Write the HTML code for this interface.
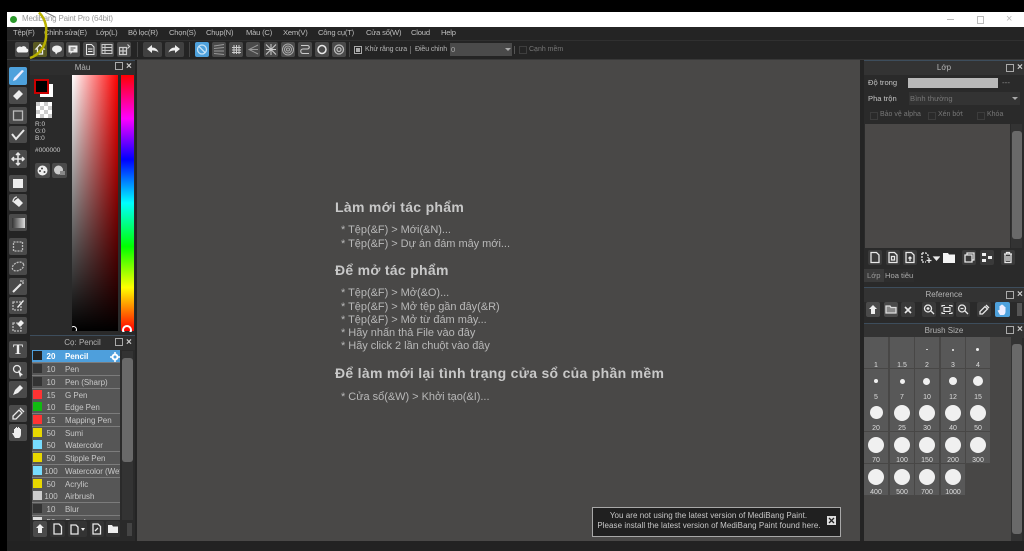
<!DOCTYPE html>
<html><head><meta charset="utf-8"><style>
html,body{margin:0;padding:0;background:#000}
#r{position:relative;width:1024px;height:551px;overflow:hidden;background:#000;font-family:"Liberation Sans","Noto Sans CJK JP",sans-serif;font-size:8px;color:#c4c4c4}
#r div,#r span.a,#r svg{position:absolute}
.t{white-space:nowrap;line-height:10px}
.b{background:#4a4a4a;border-radius:2px}
.d{background:#333;border-radius:2px}
.hd{background:#333;border-top:1px solid #3d4d5c;color:#b4b4b4;text-align:center;line-height:14px;font-size:8px}
.m{top:28px;font-size:7.6px;color:#bdbdbd;letter-spacing:-.2px}
.h{left:335px;font-weight:bold;font-size:14px;letter-spacing:.3px;color:#c8c8c8;white-space:nowrap;line-height:16px}
.l{left:341px;font-size:11px;letter-spacing:-.03px;color:#b8b8b8;white-space:nowrap;line-height:13px}
.row{left:32px;width:88px;height:12px;background:#565656;color:#c8c8c8;font-size:8px;line-height:14px;border-bottom:1px solid #7c7c7c}
.row .s{left:1px;top:1px;width:9px;height:9px}
.row .n{left:12px;top:0;width:14px;text-align:center}
.row .p{left:33px;top:0;white-space:nowrap;width:55px;overflow:hidden;letter-spacing:-.05px}
.c{width:24px;height:31px;background:#585858}
.c div{background:#f0f0f0;border-radius:50%}
.c span{position:absolute;left:0;width:24px;bottom:-2px;text-align:center;font-size:7px;line-height:9px;color:#ddd}
svg{fill:none;stroke:#e8e8e8;stroke-width:1.3}
</style></head><body><div id="r">
<!-- titlebar -->
<div style="left:7px;top:12px;width:1017px;height:15px;background:#fff"></div>
<div style="left:10px;top:16px;width:7px;height:7px;border-radius:50%;background:#2c9a2c"></div>
<div class="t" style="left:22px;top:14px;font-size:8px;letter-spacing:-.2px;color:#9a9a9a">MediBang Paint Pro (64bit)</div>
<div style="left:947px;top:19px;width:7px;height:1px;background:#bbb"></div>
<div style="left:977px;top:16px;width:5px;height:6px;border:1px solid #bbb"></div>
<div class="t" style="left:1006px;top:14px;font-size:11px;color:#bbb">×</div>
<!-- left black and base -->
<div style="left:7px;top:27px;width:1017px;height:524px;background:#242424"></div>
<div style="left:7px;top:40px;width:1017px;height:1px;background:#303030"></div>
<div style="left:7px;top:59px;width:1017px;height:1px;background:#383838"></div>
<!-- menu -->
<div class="t m" style="left:13px">Tệp(F)</div>
<div class="t m" style="left:44px">Chỉnh sửa(E)</div>
<div class="t m" style="left:96px">Lớp(L)</div>
<div class="t m" style="left:128px">Bộ lọc(R)</div>
<div class="t m" style="left:169px">Chọn(S)</div>
<div class="t m" style="left:206px">Chụp(N)</div>
<div class="t m" style="left:246px">Màu (C)</div>
<div class="t m" style="left:283px">Xem(V)</div>
<div class="t m" style="left:318px">Công cụ(T)</div>
<div class="t m" style="left:366px">Cửa sổ(W)</div>
<div class="t m" style="left:411px">Cloud</div>
<div class="t m" style="left:441px">Help</div>
<!-- toolbar left -->
<div class="b" style="left:15px;top:42px;width:14px;height:15px"></div>
<svg style="left:15px;top:42px" width="14" height="15"><path d="M3 10.500h8a2 2 0 0 0 .5-4 3 3 0 0 0-5-1.500 2.500 2.500 0 0 0-3.500 5.500z" fill="#f4f4f4" stroke="none"/></svg>
<div class="b" style="left:33px;top:42px;width:14px;height:15px;background:#5a5a22"></div>
<svg style="left:33px;top:42px" width="14" height="15"><path d="M7 2.500L3 7h1.500v5h5V7H11z" stroke="#eee"/></svg>
<div class="b" style="left:50px;top:42px;width:14px;height:15px"></div>
<svg style="left:50px;top:42px" width="14" height="15"><ellipse cx="7" cy="7" rx="5" ry="3.500" fill="#eee" stroke="none"/><path d="M5 10l1 2.500 2-2.500z" fill="#eee" stroke="none"/></svg>
<div class="b" style="left:66px;top:42px;width:14px;height:15px"></div>
<svg style="left:66px;top:42px" width="14" height="15"><path d="M2.500 3.500h9v7H6L4.500 12.500v-2h-2z" fill="#eee" stroke="none"/><path d="M4.500 6h5M4.500 8h3" stroke="#4a4a4a" stroke-width="1"/></svg>
<div class="b" style="left:83px;top:42px;width:14px;height:15px"></div>
<svg style="left:83px;top:42px" width="14" height="15"><path d="M3.500 2.500h5l2.500 2.500v7.500h-7.500zM5 7h4.500M5 9.500h4.500" stroke-width="1"/></svg>
<div class="b" style="left:100px;top:42px;width:14px;height:15px"></div>
<svg style="left:100px;top:42px" width="14" height="15"><path d="M2 2.500h10v9H2zM2 5.500h10M2 8.500h10M5 2.500v9" stroke-width="1" stroke="#ccc"/></svg>
<div class="b" style="left:117px;top:42px;width:14px;height:15px"></div>
<svg style="left:117px;top:42px" width="14" height="15"><path d="M2.500 5.500h7v7h-7zM2.500 9h7M6 5.500v7M10.500 2.500l2 2-2 2" stroke-width="1.200" stroke="#ccc"/></svg>
<div style="left:137px;top:42px;width:1px;height:15px;background:#444"></div>
<div class="b" style="left:143px;top:42px;width:19px;height:15px;background:#404040"></div>
<svg style="left:143px;top:42px" width="19" height="15"><path d="M4 7l5-4v2.500c3 0 5.500 1.500 6.500 5-1.500-1.500-3.500-2-6.500-2V11z" fill="#eee" stroke="none"/></svg>
<div class="b" style="left:165px;top:42px;width:19px;height:15px;background:#404040"></div>
<svg style="left:165px;top:42px" width="19" height="15"><path d="M15 7l-5-4v2.500c-3 0-5.500 1.500-6.500 5 1.500-1.500 3.500-2 6.500-2V11z" fill="#eee" stroke="none"/></svg>
<div style="left:189px;top:42px;width:1px;height:15px;background:#444"></div>
<div class="b" style="left:195px;top:42px;width:14px;height:15px;background:#4ea1dc"></div>
<svg style="left:195px;top:42px" width="14" height="15"><circle cx="7" cy="7.500" r="4.500" stroke="#c5e2f5"/><path d="M4 4.500l6 6" stroke="#c5e2f5"/></svg>
<div class="b" style="left:212px;top:42px;width:14px;height:15px"></div>
<svg style="left:212px;top:42px" width="14" height="15"><path d="M2 4l10-1.500M2 6.500l10-1M2 9l10 0M2 11.500l10 1" stroke="#999" stroke-width="1"/></svg>
<div class="b" style="left:229px;top:42px;width:14px;height:15px"></div>
<svg style="left:229px;top:42px" width="14" height="15"><path d="M5 3v9M7.500 3v9M10 3v9M3 5.500h9M3 8h9M3 10.500h9" stroke="#ccc" stroke-width="1"/></svg>
<div class="b" style="left:246px;top:42px;width:14px;height:15px"></div>
<svg style="left:246px;top:42px" width="14" height="15"><path d="M12 3L3 7.500l9 4.500M12 7.500H3" stroke="#999" stroke-width="1"/></svg>
<div class="b" style="left:264px;top:42px;width:14px;height:15px"></div>
<svg style="left:264px;top:42px" width="14" height="15"><path d="M2 2.500l10 10M12 2.500l-10 10M7 2v11M2 7.500h10" stroke="#ccc" stroke-width="1"/></svg>
<div class="b" style="left:281px;top:42px;width:14px;height:15px"></div>
<svg style="left:281px;top:42px" width="14" height="15"><circle cx="7" cy="7.500" r="5.500" stroke="#aaa" stroke-width="1"/><circle cx="7" cy="7.500" r="3.500" stroke="#aaa" stroke-width="1"/><circle cx="7" cy="7.500" r="1.500" stroke="#aaa" stroke-width="1"/></svg>
<div class="b" style="left:298px;top:42px;width:14px;height:15px"></div>
<svg style="left:298px;top:42px" width="14" height="15"><path d="M3 3.500h6.500a1.500 1.500 0 0 1 0 3.500H5a1.500 1.500 0 0 0 0 4.500h6" stroke="#ccc" stroke-width="1.100"/></svg>
<div class="b" style="left:315px;top:42px;width:14px;height:15px"></div>
<svg style="left:315px;top:42px" width="14" height="15"><circle cx="7" cy="7.500" r="4" stroke-width="1.500"/></svg>
<div class="b" style="left:332px;top:42px;width:14px;height:15px"></div>
<svg style="left:332px;top:42px" width="14" height="15"><circle cx="7" cy="7.500" r="4.500" stroke="#bbb"/><circle cx="7" cy="7.500" r="2" stroke="#bbb"/></svg>
<div style="left:349px;top:42px;width:1px;height:15px;background:#444"></div>
<div style="left:354px;top:46px;width:6px;height:6px;border:1px solid #aaa"></div>
<div style="left:356px;top:48px;width:4px;height:4px;background:#aaa"></div>
<div class="t" style="left:365px;top:45px;font-size:7px;letter-spacing:-.1px;color:#b4b4b4">Khử răng cưa</div>
<div style="left:410px;top:46px;width:1px;height:8px;background:#666"></div>
<div class="t" style="left:415px;top:45px;font-size:7px;letter-spacing:-.1px;color:#b4b4b4">Điều chỉnh</div>
<div style="left:450px;top:43px;width:62px;height:13px;background:#4a4a4a"></div>
<div class="t" style="left:451px;top:45px;font-size:7.500px;color:#aaa">0</div>
<div style="left:505px;top:48px;width:0;height:0;border:3px solid transparent;border-top:3px solid #aaa"></div>
<div style="left:514px;top:46px;width:1px;height:8px;background:#555"></div>
<div style="left:519px;top:46px;width:6px;height:6px;border:1px solid #3e3e3e"></div>
<div class="t" style="left:529px;top:45px;font-size:7px;color:#777">Cạnh mềm</div>
<!-- canvas -->
<div style="left:137px;top:60px;width:723px;height:481px;background:#494847"></div>
<div style="left:0;top:0;width:7px;height:551px;background:#000"></div>
<div class="h" style="top:199px">Làm mới tác phẩm</div>
<div class="l" style="top:224px">* Tệp(&amp;F) &gt; Mới(&amp;N)...</div>
<div class="l" style="top:238px">* Tệp(&amp;F) &gt; Dự án đám mây mới...</div>
<div class="h" style="top:262px">Để mở tác phẩm</div>
<div class="l" style="top:287px">* Tệp(&amp;F) &gt; Mở(&amp;O)...</div>
<div class="l" style="top:301px">* Tệp(&amp;F) &gt; Mở tệp gần đây(&amp;R)</div>
<div class="l" style="top:314px">* Tệp(&amp;F) &gt; Mở từ đám mây...</div>
<div class="l" style="top:327px">* Hãy nhấn thả File vào đây</div>
<div class="l" style="top:340px">* Hãy click 2 lần chuột vào đây</div>
<div class="h" style="top:365px">Để làm mới lại tình trạng cửa sổ của phần mềm</div>
<div class="l" style="top:391px">* Cửa sổ(&amp;W) &gt; Khởi tạo(&amp;I)...</div>
<!-- notification -->
<div style="left:592px;top:507px;width:247px;height:28px;background:#202020;border:1px solid #a8a8a8"></div>
<div class="t" style="left:592px;top:511px;width:233px;text-align:center;font-size:8px;letter-spacing:.05px;color:#c8c8c8">You are not using the latest version of MediBang Paint.</div>
<div class="t" style="left:592px;top:521px;width:234px;text-align:center;font-size:8px;letter-spacing:.05px;color:#c8c8c8">Please install the latest version of MediBang Paint found here.</div>
<div style="left:827px;top:516px;width:9px;height:9px;background:#ddd"></div>
<svg style="left:827px;top:516px" width="9" height="9"><path d="M2 2l5 5M7 2l-5 5" stroke="#222"/></svg>
<!-- tool column -->
<div class="b" style="left:9px;top:67px;width:18px;height:18px;background:#4ea1dc"></div>
<svg style="left:9px;top:67px" width="18" height="18"><path d="M4 14l3-1 8-9-2-1-8 8z" fill="#eef" stroke="none"/></svg>
<div class="b" style="left:9px;top:87px;width:18px;height:17px"></div>
<svg style="left:9px;top:87px" width="18" height="17"><path d="M4 9l6-6 4 4-6 6z" fill="#eee" stroke="none"/></svg>
<div class="b" style="left:9px;top:107px;width:18px;height:17px"></div>
<svg style="left:9px;top:107px" width="18" height="17"><rect x="4.500" y="4" width="9" height="9" stroke="#bbb"/></svg>
<div class="b" style="left:9px;top:126px;width:18px;height:17px"></div>
<svg style="left:9px;top:126px" width="18" height="17"><path d="M3 8l4 5 8-9" stroke-width="2"/></svg>
<div class="b" style="left:9px;top:150px;width:18px;height:18px"></div>
<svg style="left:9px;top:150px" width="18" height="18"><path d="M9 3v12M3 9h12M7 5l2-2 2 2M7 13l2 2 2-2M5 7l-2 2 2 2M13 7l2 2-2 2" stroke-width="1.500"/></svg>
<div class="b" style="left:9px;top:175px;width:18px;height:17px"></div>
<div style="left:13px;top:179px;width:10px;height:9px;background:#eee"></div>
<div class="b" style="left:9px;top:194px;width:18px;height:17px"></div>
<svg style="left:9px;top:194px" width="18" height="17"><path d="M4 8l5-4 5 5-4 4z" fill="#eee" stroke="none"/><path d="M4 8c0-3 2-5 4-5" /></svg>
<div class="b" style="left:9px;top:214px;width:18px;height:17px"></div>
<div style="left:12px;top:218px;width:13px;height:10px;background:linear-gradient(90deg,#333,#ddd)"></div>
<div class="b" style="left:9px;top:238px;width:18px;height:17px"></div>
<svg style="left:9px;top:238px" width="18" height="17"><rect x="4.500" y="4" width="9" height="9" stroke="#bbb" stroke-dasharray="2 1"/></svg>
<div class="b" style="left:9px;top:258px;width:18px;height:17px"></div>
<svg style="left:9px;top:258px" width="18" height="17"><ellipse cx="9" cy="8.500" rx="6" ry="4" transform="rotate(-25 9 8.500)" stroke="#bbb" stroke-dasharray="2 1"/></svg>
<div class="b" style="left:9px;top:278px;width:18px;height:17px"></div>
<svg style="left:9px;top:278px" width="18" height="17"><path d="M4 14l8-8" stroke-width="2"/><path d="M12 2v2M15 5h-2M14.500 2.500l-1 1" stroke-width="1"/></svg>
<div class="b" style="left:9px;top:297px;width:18px;height:17px"></div>
<svg style="left:9px;top:297px" width="18" height="17"><rect x="4" y="5" width="8" height="8" stroke="#bbb" stroke-dasharray="2 1"/><path d="M8 10l6-7 1 1-6 7z" fill="#eee" stroke="none"/></svg>
<div class="b" style="left:9px;top:317px;width:18px;height:17px"></div>
<svg style="left:9px;top:317px" width="18" height="17"><rect x="4" y="6" width="8" height="8" stroke="#bbb" stroke-dasharray="2 1"/><path d="M8 7l4-4 3 3-4 4z" fill="#eee" stroke="none"/></svg>
<div class="b" style="left:9px;top:341px;width:18px;height:17px"></div>
<div class="t" style="left:9px;top:341px;width:18px;text-align:center;font:bold 15px/18px 'Liberation Serif',serif;color:#eee">T</div>
<div class="b" style="left:9px;top:362px;width:18px;height:17px"></div>
<svg style="left:9px;top:362px" width="18" height="17"><circle cx="8" cy="7" r="3.500"/><path d="M9 8l5 5-2 .5-1 2z" fill="#eee" stroke="none"/></svg>
<div class="b" style="left:9px;top:381px;width:18px;height:17px"></div>
<svg style="left:9px;top:381px" width="18" height="17"><path d="M4 14l2-5 5-5 3 3-5 5z" fill="#eee" stroke="none"/></svg>
<div class="b" style="left:9px;top:405px;width:18px;height:17px"></div>
<svg style="left:9px;top:405px" width="18" height="17"><path d="M4 14v-3l6-6 3 3-6 6zM11 3l4 4"/></svg>
<div class="b" style="left:9px;top:424px;width:18px;height:17px"></div>
<svg style="left:9px;top:424px" width="18" height="17"><path d="M6 14l-3-5 2 0V5h1V4h1v-1h1v1h1v-1h1v1h1v1h1v5c0 2-1 4-2 4z" fill="#eee" stroke="none"/></svg>
<!-- color panel -->
<div style="left:30px;top:60px;width:105px;height:275px;background:#2a2a2a"></div>
<div class="hd" style="left:30px;top:60px;width:105px;height:14px;background:#2e2e2e">Màu</div>
<div class="t" style="left:115px;top:62px;width:6px;height:6px;border:1px solid #aaa"></div>
<div class="t" style="left:126px;top:60px;font:bold 10px/13px 'Liberation Sans';color:#ccc">×</div>
<div style="left:40px;top:84px;width:13px;height:13px;background:#fff"></div>
<div style="left:34px;top:79px;width:11px;height:11px;background:#000;border:2px solid #c00"></div>
<div style="left:36px;top:102px;width:16px;height:16px;background:conic-gradient(#fff 25%,#ccc 25% 50%,#fff 50% 75%,#ccc 75%);background-size:8px 8px"></div>
<div class="t" style="left:35px;top:121px;font-size:6.500px;line-height:7px;color:#ccc">R:0<br>G:0<br>B:0</div>
<div class="t" style="left:35px;top:146px;font-size:6.500px;color:#ccc">#000000</div>
<div class="b" style="left:35px;top:163px;width:15px;height:15px"></div>
<svg style="left:35px;top:163px" width="15" height="15"><circle cx="7.500" cy="7.500" r="5" fill="#eee" stroke="none"/><circle cx="7" cy="5.500" r="1" fill="#444" stroke="none"/><circle cx="5" cy="8" r="1" fill="#444" stroke="none"/><circle cx="9.500" cy="9" r="1" fill="#444" stroke="none"/></svg>
<div class="b" style="left:52px;top:163px;width:15px;height:15px"></div>
<svg style="left:52px;top:163px" width="15" height="15"><circle cx="6.500" cy="7" r="4.500" fill="#ccc" stroke="none"/><rect x="8" y="8" width="5" height="4" fill="#888" stroke="none"/></svg>
<div style="left:72px;top:75px;width:46px;height:256px;background:linear-gradient(to top,#000,transparent),linear-gradient(to right,#fff,#f00)"></div>
<div style="left:121px;top:75px;width:13px;height:256px;background:linear-gradient(to bottom,#f00 0,#f0f 17%,#00f 33%,#0ff 50%,#0f0 67%,#ff0 83%,#f00 100%)"></div>
<div style="left:122px;top:325px;width:6px;height:6px;border:2px solid #fff;border-radius:50%;clip-path:inset(0 0 3px 0)"></div>
<div style="left:70px;top:326px;width:5px;height:5px;border:1px solid #fff;border-radius:50%;clip-path:inset(0 0 2px 2px)"></div>
<!-- brush panel -->
<div style="left:30px;top:335px;width:105px;height:206px;background:#2a2a2a"></div>
<div class="hd" style="left:30px;top:335px;width:105px;height:14px;background:#2e2e2e">Cọ: Pencil</div>
<div class="t" style="left:115px;top:338px;width:6px;height:6px;border:1px solid #aaa"></div>
<div class="t" style="left:126px;top:336px;font:bold 10px/13px 'Liberation Sans';color:#ccc">×</div>
<div style="left:32px;top:350px;width:88px;height:170px;background:#565656;overflow:hidden">
<div class="row" style="left:0;top:0;background:#4e9fdc;color:#fff;font-weight:bold"><div class="s" style="background:#222"></div><div class="n">20</div><div class="p">Pencil</div></div>
<div class="row" style="left:0;top:13px"><div class="s" style="background:#333"></div><div class="n">10</div><div class="p">Pen</div></div>
<div class="row" style="left:0;top:26px"><div class="s" style="background:#333"></div><div class="n">10</div><div class="p">Pen (Sharp)</div></div>
<div class="row" style="left:0;top:39px"><div class="s" style="background:#f33"></div><div class="n">15</div><div class="p">G Pen</div></div>
<div class="row" style="left:0;top:51px"><div class="s" style="background:#1b1"></div><div class="n">10</div><div class="p">Edge Pen</div></div>
<div class="row" style="left:0;top:64px"><div class="s" style="background:#f33"></div><div class="n">15</div><div class="p">Mapping Pen</div></div>
<div class="row" style="left:0;top:77px"><div class="s" style="background:#e8d800"></div><div class="n">50</div><div class="p">Sumi</div></div>
<div class="row" style="left:0;top:89px"><div class="s" style="background:#7df"></div><div class="n">50</div><div class="p">Watercolor</div></div>
<div class="row" style="left:0;top:102px"><div class="s" style="background:#e8d800"></div><div class="n">50</div><div class="p">Stipple Pen</div></div>
<div class="row" style="left:0;top:115px"><div class="s" style="background:#7df"></div><div class="n">100</div><div class="p">Watercolor (Wet)</div></div>
<div class="row" style="left:0;top:128px"><div class="s" style="background:#e8d800"></div><div class="n">50</div><div class="p">Acrylic</div></div>
<div class="row" style="left:0;top:140px"><div class="s" style="background:#ccc"></div><div class="n">100</div><div class="p">Airbrush</div></div>
<div class="row" style="left:0;top:153px"><div class="s" style="background:#333"></div><div class="n">10</div><div class="p">Blur</div></div>
<div class="row" style="left:0;top:166px"><div class="s" style="background:#ddd"></div><div class="n">50</div><div class="p">Smudge</div></div>
</div>
<svg style="left:110px;top:352px" width="10" height="10"><circle cx="5" cy="5" r="2.500" stroke-width="2" stroke="#fff"/><path d="M5 0v2M5 8v2M0 5h2M8 5h2" stroke="#fff" stroke-width="1.500"/></svg>
<div style="left:122px;top:351px;width:11px;height:169px;background:#333"></div>
<div style="left:122px;top:358px;width:11px;height:104px;background:#696969;border-radius:3px"></div>
<div class="b" style="left:33px;top:521px;width:14px;height:16px"></div>
<svg style="left:33px;top:521px" width="14" height="16"><path d="M7 3l4 4H9v5H5V7H3z" fill="#eee" stroke="none"/></svg>
<div class="d" style="left:50px;top:521px;width:15px;height:16px"></div>
<svg style="left:50px;top:521px" width="15" height="16"><path d="M4 3h5l2.500 2.500V13H4z"/></svg>
<div class="d" style="left:68px;top:521px;width:19px;height:16px"></div>
<svg style="left:68px;top:521px" width="19" height="16"><path d="M3 4h5l2 2v7H3z"/><path d="M13 7h4l-2 3z" fill="#eee" stroke="none"/></svg>
<div class="d" style="left:90px;top:521px;width:14px;height:16px"></div>
<svg style="left:90px;top:521px" width="14" height="16"><path d="M3 3h5l2.500 2.500V13H3zM5 10l3-3"/></svg>
<div class="d" style="left:106px;top:521px;width:14px;height:16px"></div>
<svg style="left:106px;top:521px" width="14" height="16"><path d="M2 4h4l1 1.500h5V12H2z" fill="#eee" stroke="none"/></svg>
<div style="left:127px;top:523px;width:5px;height:13px;background:#444"></div>
<!-- layer panel -->
<div style="left:864px;top:60px;width:160px;height:224px;background:#2a2a2a"></div>
<div class="hd" style="left:864px;top:60px;width:160px;height:14px;background:#333">Lớp</div>
<div style="left:1006px;top:64px;width:6px;height:6px;border:1px solid #aaa"></div>
<div class="t" style="left:1017px;top:61px;font:bold 10px/13px 'Liberation Sans';color:#ccc">×</div>
<div class="t" style="left:868px;top:78px;color:#c4c4c4;font-size:7.600px">Độ trong</div>
<div style="left:908px;top:78px;width:90px;height:10px;background:#b9b9b9"></div>
<div class="t" style="left:1002px;top:78px;color:#888">---</div>
<div class="t" style="left:868px;top:94px;color:#c4c4c4;font-size:7.600px">Pha trộn</div>
<div style="left:909px;top:92px;width:111px;height:13px;background:#333"></div>
<div class="t" style="left:910px;top:94px;color:#777;font-size:7.600px">Bình thường</div>
<div style="left:1012px;top:97px;width:0;height:0;border:3px solid transparent;border-top:3px solid #aaa"></div>
<div style="left:870px;top:112px;width:6px;height:6px;border:1px solid #3c3c3c"></div>
<div class="t" style="left:880px;top:110px;color:#777;font-size:7px">Bảo vệ alpha</div>
<div style="left:928px;top:112px;width:6px;height:6px;border:1px solid #3c3c3c"></div>
<div class="t" style="left:938px;top:110px;color:#777;font-size:7px">Xén bớt</div>
<div style="left:977px;top:112px;width:6px;height:6px;border:1px solid #3c3c3c"></div>
<div class="t" style="left:987px;top:110px;color:#777;font-size:7px">Khóa</div>
<div style="left:865px;top:124px;width:145px;height:124px;background:#4a4847"></div>
<div style="left:1011px;top:124px;width:11px;height:124px;background:#333"></div>
<div style="left:1012px;top:131px;width:10px;height:108px;background:#696969;border-radius:3px"></div>
<div class="d" style="left:868px;top:250px;width:14px;height:15px;background:#3a3a3a"></div>
<svg style="left:868px;top:250px" width="14" height="15"><path d="M3 2.500h5.500L11 5v7.500H3z"/></svg>
<div class="d" style="left:886px;top:250px;width:14px;height:15px;background:#3a3a3a"></div>
<svg style="left:886px;top:250px" width="14" height="15"><path d="M3 2.500h5.500L11 5v7.500H3zM5.500 6.500h3v3.500h-3z"/></svg>
<div class="d" style="left:903px;top:250px;width:14px;height:15px;background:#3a3a3a"></div>
<svg style="left:903px;top:250px" width="14" height="15"><path d="M3 2.500h5.500L11 5v7.500H3zM7 11V7M5.500 8.500L7 7l1.500 1.500"/></svg>
<svg style="left:920px;top:250px" width="20" height="15"><path d="M2 3h4l2 2v3M2 3v9h4" stroke-dasharray="2 1"/><path d="M9 8v5M6.500 10.500h5M14 7h5l-2.500 3z" fill="#eee"/></svg>
<svg style="left:942px;top:250px" width="14" height="15"><path d="M1 3h5l1 1.500h6V13H1z" fill="#f4f4f4" stroke="none"/></svg>
<div class="d" style="left:962px;top:250px;width:14px;height:15px;background:#3a3a3a"></div>
<svg style="left:962px;top:250px" width="14" height="15"><path d="M3 5h7v7H3zM5 5V3h7v7h-2"/></svg>
<div class="d" style="left:980px;top:250px;width:14px;height:15px;background:#3a3a3a"></div>
<svg style="left:980px;top:250px" width="14" height="15"><path d="M2 3h4v3H2zM2 9h4v3H2zM8 6h4v3H8z" fill="#eee" stroke="none"/></svg>
<div class="d" style="left:1001px;top:250px;width:14px;height:15px;background:#3a3a3a"></div>
<svg style="left:1001px;top:250px" width="14" height="15"><path d="M3 4h8M4 4v8.500h6V4M6 6v5M8 6v5M5.500 4V2.500h3V4"/></svg>
<div style="left:864px;top:269px;width:20px;height:13px;background:#3a3a3a"></div>
<div class="t" style="left:867px;top:271px;color:#999;font-size:7.600px">Lớp</div>
<div style="left:884px;top:269px;width:30px;height:13px;background:#2d2d2d"></div>
<div class="t" style="left:885px;top:271px;color:#aaa;font-size:7.600px">Hoa tiêu</div>
<!-- reference -->
<div style="left:864px;top:284px;width:160px;height:36px;background:#2a2a2a"></div>
<div class="hd" style="left:864px;top:287px;width:160px;height:14px;background:#333">Reference</div>
<div style="left:1006px;top:291px;width:6px;height:6px;border:1px solid #aaa"></div>
<div class="t" style="left:1017px;top:288px;font:bold 10px/13px 'Liberation Sans';color:#ccc">×</div>
<div class="b" style="left:866px;top:302px;width:14px;height:15px"></div>
<svg style="left:866px;top:302px" width="14" height="15"><path d="M7 3l4 4H9v5H5V7H3z" fill="#eee" stroke="none"/></svg>
<div class="b" style="left:884px;top:302px;width:14px;height:15px"></div>
<svg style="left:884px;top:302px" width="14" height="15"><path d="M2 4h4l1 1.500h5V11H2z" stroke="#ddd" fill="#888"/></svg>
<div class="d" style="left:901px;top:302px;width:14px;height:15px;background:#3a3a3a"></div>
<svg style="left:901px;top:302px" width="14" height="15"><path d="M4 5l6 6M10 5l-6 6" stroke-width="1.600"/></svg>
<div class="d" style="left:922px;top:302px;width:14px;height:15px;background:#3a3a3a"></div>
<svg style="left:922px;top:302px" width="14" height="15"><circle cx="6" cy="6.500" r="3.500"/><path d="M9 9l3 3M4.500 6.500h3M6 5v3"/></svg>
<div class="d" style="left:940px;top:302px;width:14px;height:15px;background:#3a3a3a"></div>
<svg style="left:940px;top:302px" width="14" height="15"><path d="M2 5V3.500h3M9 3.500h3V5M12 10v1.500H9M5 11.500H2V10M4 5.500h6v4H4z" stroke-width="1.100"/></svg>
<div class="d" style="left:956px;top:302px;width:14px;height:15px;background:#3a3a3a"></div>
<svg style="left:956px;top:302px" width="14" height="15"><circle cx="6" cy="6.500" r="3.500"/><path d="M9 9l3 3M4.500 6.500h3"/></svg>
<div class="d" style="left:977px;top:302px;width:14px;height:15px;background:#3a3a3a"></div>
<svg style="left:977px;top:302px" width="14" height="15"><path d="M3 12v-2.500l5-5 2.500 2.500-5 5zM9 3l3 3"/></svg>
<div class="b" style="left:995px;top:302px;width:15px;height:15px;background:#4ea1dc"></div>
<svg style="left:995px;top:302px" width="15" height="15"><path d="M5 13L2.500 8.500l2-.5V4h1V3h1v-.5h1V3h1v1h1v1h1v4.500c0 2-1 3.500-2 3.500z" fill="#eef" stroke="none"/></svg>
<div style="left:1017px;top:303px;width:5px;height:13px;background:#555"></div>
<!-- brush size -->
<div style="left:864px;top:320px;width:160px;height:221px;background:#2a2a2a"></div>
<div class="hd" style="left:864px;top:323px;width:160px;height:14px;background:#333">Brush Size</div>
<div style="left:1006px;top:326px;width:6px;height:6px;border:1px solid #aaa"></div>
<div class="t" style="left:1017px;top:323px;font:bold 10px/13px 'Liberation Sans';color:#ccc">×</div>
<div style="left:864px;top:337px;width:147px;height:204px;background:#484746"></div>
<div style="left:1011px;top:337px;width:11px;height:204px;background:#333"></div>
<div style="left:1012px;top:344px;width:10px;height:190px;background:#696969;border-radius:3px"></div>
<div class="c" style="left:864px;top:337px"><span>1</span></div>
<div class="c" style="left:890px;top:337px"><span>1.5</span></div>
<div class="c" style="left:915px;top:337px"><div style="left:11px;top:12px;width:2px;height:1px"></div><span>2</span></div>
<div class="c" style="left:941px;top:337px"><div style="left:11px;top:12px;width:2px;height:2px"></div><span>3</span></div>
<div class="c" style="left:966px;top:337px"><div style="left:10px;top:11px;width:3px;height:3px"></div><span>4</span></div>
<div class="c" style="left:864px;top:369px"><div style="left:10px;top:10px;width:4px;height:4px"></div><span>5</span></div>
<div class="c" style="left:890px;top:369px"><div style="left:10px;top:10px;width:5px;height:5px"></div><span>7</span></div>
<div class="c" style="left:915px;top:369px"><div style="left:8px;top:9px;width:7px;height:7px"></div><span>10</span></div>
<div class="c" style="left:941px;top:369px"><div style="left:8px;top:8px;width:8px;height:8px"></div><span>12</span></div>
<div class="c" style="left:966px;top:369px"><div style="left:7px;top:7px;width:10px;height:10px"></div><span>15</span></div>
<div class="c" style="left:864px;top:400px"><div style="left:6px;top:6px;width:13px;height:13px"></div><span>20</span></div>
<div class="c" style="left:890px;top:400px"><div style="left:4px;top:5px;width:16px;height:16px"></div><span>25</span></div>
<div class="c" style="left:915px;top:400px"><div style="left:4px;top:5px;width:16px;height:16px"></div><span>30</span></div>
<div class="c" style="left:941px;top:400px"><div style="left:4px;top:5px;width:16px;height:16px"></div><span>40</span></div>
<div class="c" style="left:966px;top:400px"><div style="left:4px;top:5px;width:16px;height:16px"></div><span>50</span></div>
<div class="c" style="left:864px;top:432px"><div style="left:4px;top:5px;width:16px;height:16px"></div><span>70</span></div>
<div class="c" style="left:890px;top:432px"><div style="left:4px;top:5px;width:16px;height:16px"></div><span>100</span></div>
<div class="c" style="left:915px;top:432px"><div style="left:4px;top:5px;width:16px;height:16px"></div><span>150</span></div>
<div class="c" style="left:941px;top:432px"><div style="left:4px;top:5px;width:16px;height:16px"></div><span>200</span></div>
<div class="c" style="left:966px;top:432px"><div style="left:4px;top:5px;width:16px;height:16px"></div><span>300</span></div>
<div class="c" style="left:864px;top:464px"><div style="left:4px;top:5px;width:16px;height:16px"></div><span>400</span></div>
<div class="c" style="left:890px;top:464px"><div style="left:4px;top:5px;width:16px;height:16px"></div><span>500</span></div>
<div class="c" style="left:915px;top:464px"><div style="left:4px;top:5px;width:16px;height:16px"></div><span>700</span></div>
<div class="c" style="left:941px;top:464px"><div style="left:4px;top:5px;width:16px;height:16px"></div><span>1000</span></div>
<!-- bottom bar -->
<div style="left:7px;top:541px;width:1017px;height:10px;background:#222"></div>
<!-- cursor highlight -->
<svg style="left:0;top:0" width="70" height="70"><path d="M39 12.500A24 24 0 0 1 46 33 24 24 0 0 1 30 58" stroke="#b8b000" stroke-width="2.500"/><path d="M45 12l10 5" stroke="#777" stroke-width="1"/></svg>
</div></body></html>
